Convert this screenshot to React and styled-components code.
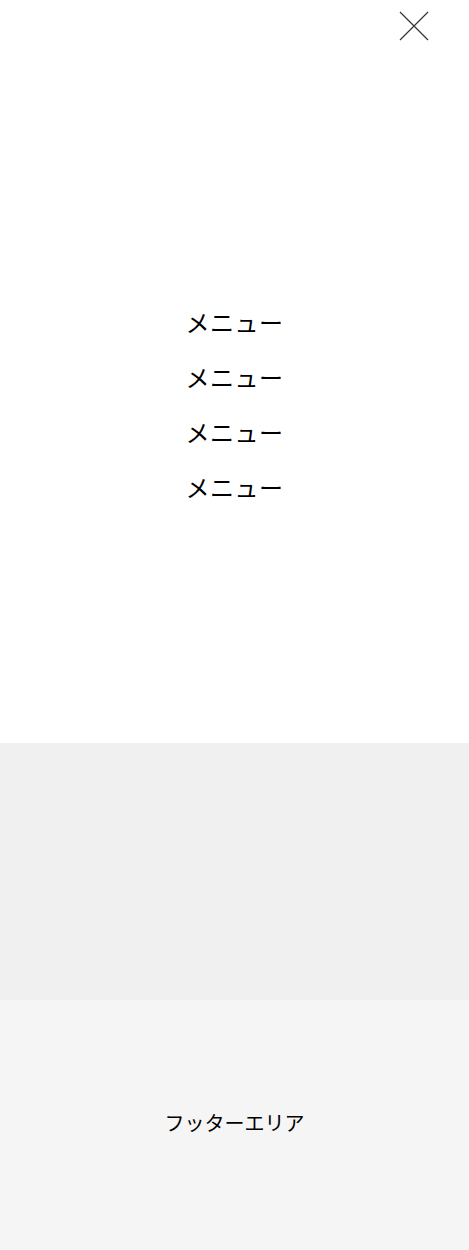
import styled, { createGlobalStyle } from "styled-components";

const GlobalStyle = createGlobalStyle`
  * { box-sizing: border-box; }
  body {
    margin: 0;
    background: #fff;
    color: #000;
    font-family: "Noto Sans CJK JP", "Noto Sans", sans-serif;
  }
  ul { margin: 0; padding: 0; list-style: none; }
`;

const StyledMenuArea = styled.div`
  position: relative;
  height: 743px;
  background: #fff;
  display: flex;
  flex-direction: column;
  align-items: center;
  padding-top: 294px;
`;
const StyledClose = styled.button`
  position: absolute;
  top: 11px;
  right: 40px;
  width: 30px;
  height: 30px;
  padding: 0;
  border: none;
  background: none;
  cursor: pointer;
`;
const StyledMenuItem = styled.li`
  height: 55px;
  font-size: 24px;
  line-height: 55px;
  letter-spacing: 0.5px;
  text-align: center;
`;
const StyledGrayBlock = styled.div`
  height: 257px;
  background: #f0f0f0;
`;
const StyledFooter = styled.footer`
  height: 250px;
  background: #f5f5f5;
  display: flex;
  align-items: center;
  justify-content: center;
  padding-bottom: 6px;
  font-size: 20px;
`;

export default function App() {
  const menus = ["メニュー", "メニュー", "メニュー", "メニュー"];
  return (
    <>
      <GlobalStyle />
      <StyledMenuArea>
        <StyledClose aria-label="close">
          <svg width="30" height="30" viewBox="0 0 30 30">
            <path d="M1 1 L29 29 M29 1 L1 29" stroke="#333" strokeWidth="1.2" />
          </svg>
        </StyledClose>
        <ul>
          {menus.map((m, i) => (
            <StyledMenuItem key={i}>{m}</StyledMenuItem>
          ))}
        </ul>
      </StyledMenuArea>
      <StyledGrayBlock />
      <StyledFooter>フッターエリア</StyledFooter>
    </>
  );
}
